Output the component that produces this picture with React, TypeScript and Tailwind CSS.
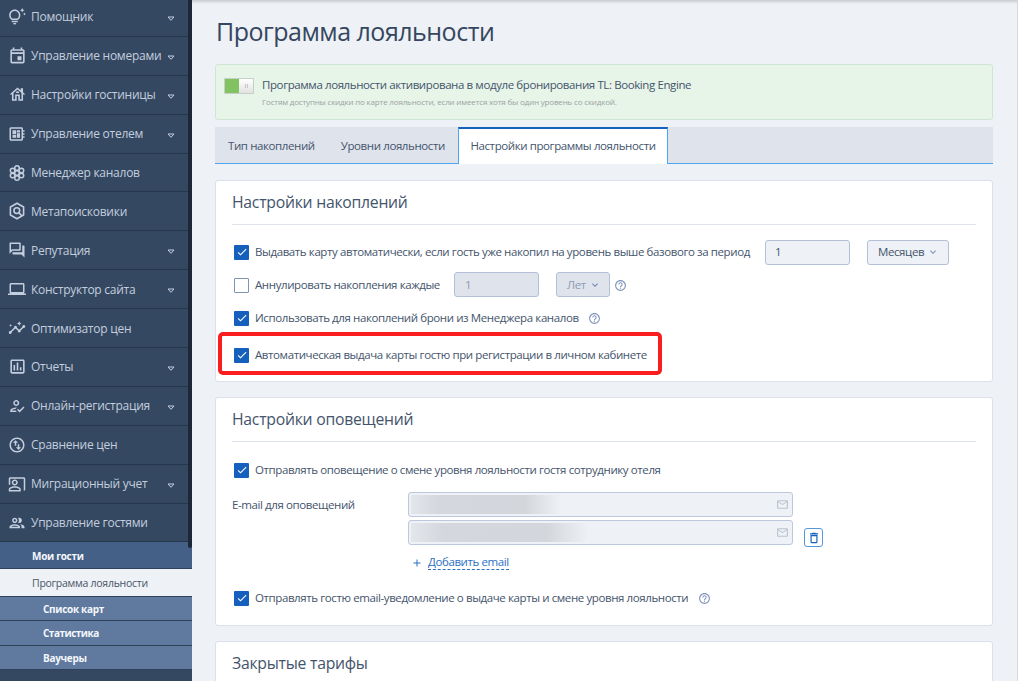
import React from "react";
import {
  MdOutlineTipsAndUpdates, MdOutlineEvent, MdOutlineHouse, MdOutlineDeveloperBoard, MdOutlineQuestionAnswer,
  MdOutlineLaptop, MdInsights, MdOutlinePoll, MdOutlineHowToReg, MdOutlineSwapVerticalCircle, MdOutlineCoPresent,
  MdOutlineGroup, MdHelpOutline, MdOutlineMail, MdDeleteOutline, MdCheck, MdKeyboardArrowDown, MdAdd,
} from "react-icons/md";

function HiveIcon() {
  return (
    <svg viewBox="0 0 18 18" className="size-[18px]" fill="none" stroke="currentColor" strokeWidth="1.5">
      <circle cx="9" cy="9" r="2.3" />
      <circle cx="9" cy="4" r="2.3" />
      <circle cx="9" cy="14" r="2.3" />
      <circle cx="4.6" cy="6.5" r="2.3" />
      <circle cx="13.4" cy="6.5" r="2.3" />
      <circle cx="4.6" cy="11.5" r="2.3" />
      <circle cx="13.4" cy="11.5" r="2.3" />
    </svg>
  );
}

function MetaIcon() {
  return (
    <svg viewBox="0 0 18 18" className="size-[18px]" fill="none" stroke="currentColor" strokeWidth="1.6">
      <path d="M9 1.3 15.6 5v8L9 16.7 2.4 13V5z" strokeLinejoin="round" />
      <circle cx="8.8" cy="8.6" r="2.9" />
      <path d="m10.9 10.8 2.8 2.8" />
    </svg>
  );
}

const items: { label: string; icon: React.ReactNode; arrow?: boolean }[] = [
  { label: "Помощник", icon: <MdOutlineTipsAndUpdates />, arrow: true },
  { label: "Управление номерами", icon: <MdOutlineEvent className="size-[19px]" />, arrow: true },
  { label: "Настройки гостиницы", icon: <MdOutlineHouse className="size-[19px]" />, arrow: true },
  { label: "Управление отелем", icon: <MdOutlineDeveloperBoard />, arrow: true },
  { label: "Менеджер каналов", icon: <HiveIcon /> },
  { label: "Метапоисковики", icon: <MetaIcon /> },
  { label: "Репутация", icon: <MdOutlineQuestionAnswer />, arrow: true },
  { label: "Конструктор сайта", icon: <MdOutlineLaptop />, arrow: true },
  { label: "Оптимизатор цен", icon: <MdInsights /> },
  { label: "Отчеты", icon: <MdOutlinePoll className="size-[19px]" />, arrow: true },
  { label: "Онлайн-регистрация", icon: <MdOutlineHowToReg />, arrow: true },
  { label: "Сравнение цен", icon: <MdOutlineSwapVerticalCircle /> },
  { label: "Миграционный учет", icon: <MdOutlineCoPresent />, arrow: true },
  { label: "Управление гостями", icon: <MdOutlineGroup /> },
];

function Sidebar() {
  return (
    <aside className="relative h-[681px] w-[192px] shrink-0 overflow-hidden bg-[#354861]">
      <nav className="-mt-[2px] flex flex-col text-[#c3cedf]">
        {items.map((it) => (
          <div key={it.label} className="flex h-[38.9px] items-center border-b border-[#26364c] pt-[1px] pl-[7px] text-[12px] font-medium tracking-[-0.26px]">
            <span className="-mt-[1px] flex w-[20px] shrink-0 justify-center text-[18px]">{it.icon}</span>
            <span className="ml-[4px] whitespace-nowrap">{it.label}</span>
            {it.arrow && (
              <svg viewBox="0 0 8 6" className="mt-[3px] mr-[17px] ml-auto h-[6px] w-[8px] shrink-0" fill="none" stroke="currentColor">
                <path d="M1 1h6L4 4.3z" />
              </svg>
            )}
          </div>
        ))}
      </nav>
      <div className="text-[10px] font-bold tracking-[-0.3px] text-[#f4f7fb]">
        <div className="flex h-[27px] items-center border-b border-[#30425b] bg-[#456087] pt-[2px] pl-[32px]">Мои гости</div>
        <div className="flex h-[27px] items-center bg-[#eef1f5] pt-[1px] pl-[32px] text-[10.5px] font-normal tracking-[-0.26px] text-[#4a5568]">Программа лояльности</div>
        <div className="flex h-[25px] items-center border-y border-[#30425b] bg-[#5f799f] pt-[1px] pl-[43px]">Список карт</div>
        <div className="flex h-[24.5px] items-center border-b border-[#30425b] bg-[#5f799f] pl-[43px] tracking-[-0.5px]">Статистика</div>
        <div className="flex h-[24.5px] items-center border-b border-[#30425b] bg-[#5f799f] pt-[1px] pl-[43px]">Ваучеры</div>
      </div>
      <div className="absolute top-0 right-0 h-[548px] w-[4px] rounded-b bg-[#1c2738]" />
    </aside>
  );
}

function Check({ on = true }: { on?: boolean }) {
  return on ? (
    <span className="flex size-[15px] shrink-0 items-center justify-center rounded-[1px] bg-[#1560bd] text-[12px] text-white"><MdCheck /></span>
  ) : (
    <span className="size-[15px] shrink-0 rounded-[1px] border-[1.5px] border-[#7d93b8] bg-white" />
  );
}

function Help({ className }: { className: string }) {
  return <MdHelpOutline className={"size-[13px] shrink-0 text-[#8093bb] " + className} />;
}

function Heading({ children }: { children: React.ReactNode }) {
  return <h2 className="flex h-[44px] items-center border-b border-[#dde2ec] pt-[1px] text-[15.75px] tracking-[-0.25px] text-[#44546c]">{children}</h2>;
}

function EmailField({ className }: { className: string }) {
  return (
    <div className="flex h-[25px] w-[385px] items-center rounded-[3px] border border-[#bcc8dc] bg-[#eef1f5] p-[2px]">
      <div className={"h-full bg-[linear-gradient(90deg,#e3e6ea,#d4d7dd_18%,#d3d6db_76%,#eef1f5)] " + className} />
      <MdOutlineMail className="mr-[1px] ml-auto size-[13px] text-[#b9c2d0]" />
    </div>
  );
}

export default function App() {
  return (
    <div className="flex h-[681px] w-[1018px] overflow-hidden bg-[#eef1f5] font-['Open_Sans','Noto_Sans',sans-serif] text-[11.5px] tracking-[-0.4px] text-[#44546c]">
      <Sidebar />
      <main className="h-[681px] flex-1 border-r border-[#d5d9de] bg-[linear-gradient(#c9ccd0,#eef1f5_4px)] pr-[24px] pl-[23px]">
        <h1 className="mt-[12px] h-[38px] pl-[1px] text-[25px] leading-[38px] font-normal tracking-[-0.5px] whitespace-nowrap text-[#35465f]">Программа лояльности</h1>
        <section className="mt-[14px] flex h-[56px] rounded-[3px] border border-[#cfe6d2] bg-[#e7f4e8] pl-[8px]">
          <div className="mt-[13px] flex h-[16px] w-[30px] rounded-[1px] border border-[#c5cfc5] bg-[#82c262]">
            <div className="ml-auto flex w-[14px] items-center justify-center gap-[1px] bg-linear-to-b from-white to-[#e2e2e2]">
              <i className="h-[4px] w-px bg-[#c5c5c5]" /><i className="h-[4px] w-px bg-[#c5c5c5]" />
            </div>
          </div>
          <div className="ml-[8px] pt-[11px]">
            <p className="h-[18px] leading-[18px]">Программа лояльности активирована в модуле бронирования TL: Booking Engine</p>
            <p className="h-[16px] text-[8px] leading-[16px] tracking-[-0.17px] text-[#9aa3a4]">Гостям доступны скидки по карте лояльности, если имеется хотя бы один уровень со скидкой.</p>
          </div>
        </section>
        <div className="mt-[7px] flex h-[37px] bg-[#dfe3ec]">
          <div className="flex w-[243px] items-center gap-[26px] border-b border-[#4ea6f2] pt-[2px] pl-[13px] whitespace-nowrap"><span>Тип накоплений</span><span>Уровни лояльности</span></div>
          <div className="flex w-[210px] items-center justify-center border-x border-t-2 border-x-[#4ea6f2] border-t-[#1560bd] bg-white pb-[2px] whitespace-nowrap">Настройки программы лояльности</div>
          <div className="flex-1 border-b border-[#4ea6f2]" />
        </div>

        <section className="mt-[16px] h-[202px] rounded-[3px] border border-[#dbe0ea] bg-white px-[16px]">
          <Heading>Настройки накоплений</Heading>
          <div className="mt-[14px] flex h-[26px] items-center pl-[2px]">
            <Check /><span className="ml-[6px] w-[510px] whitespace-nowrap">Выдавать карту автоматически, если гость уже накопил на уровень выше базового за период</span>
            <div className="flex h-[25px] w-[85px] items-center rounded-[3px] border border-[#b4c0d8] bg-[#eef1f5] pl-[9px]">1</div>
            <div className="ml-[17px] flex h-[25px] w-[82px] items-center rounded-[3px] border border-[#b4c0d8] bg-[#eef1f5] pl-[10px]">Месяцев<MdKeyboardArrowDown className="ml-[3px] size-[12px] text-[#8093bb]" /></div>
          </div>
          <div className="mt-[7px] flex h-[26px] items-center pl-[2px]">
            <Check on={false} /><span className="ml-[6px] w-[199px] whitespace-nowrap">Аннулировать накопления каждые</span>
            <div className="mb-px flex h-[25px] w-[85px] items-center rounded-[3px] border border-[#b4c0d8] bg-[#dfe3ec] pl-[10px] text-[#8d9bb3]">1</div>
            <div className="mb-px ml-[17px] flex h-[25px] w-[54px] items-center rounded-[3px] border border-[#b4c0d8] bg-[#dfe3ec] pl-[10px] text-[#8d9bb3]">Лет<MdKeyboardArrowDown className="ml-[3px] size-[12px] text-[#7187b4]" /></div>
            <Help className="mt-[1px] ml-[4px]" />
          </div>
          <div className="mt-[7px] flex h-[26px] items-center pl-[2px]">
            <Check /><span className="ml-[6px] whitespace-nowrap">Использовать для накоплений брони из Менеджера каналов</span><Help className="ml-[9px]" />
          </div>
          <div className="relative mt-[11px] flex h-[26px] items-center pl-[2px]">
            <Check /><span className="ml-[6px] whitespace-nowrap">Автоматическая выдача карты гостю при регистрации в личном кабинете</span>
            <div className="absolute -top-[10px] -left-[14px] h-[43px] w-[444px] rounded-[5px] border-4 border-[#fa1e1e]" />
          </div>
        </section>

        <section className="mt-[15px] h-[229px] rounded-[3px] border border-[#dbe0ea] bg-white px-[16px]">
          <Heading>Настройки оповещений</Heading>
          <div className="mt-[15px] flex h-[26px] items-center pl-[2px]">
            <Check /><span className="ml-[6px] whitespace-nowrap">Отправлять оповещение о смене уровня лояльности гостя сотруднику отеля</span>
          </div>
          <div className="mt-[9px] flex">
            <span className="w-[176px] pt-[4px]">E-mail для оповещений</span>
            <div>
              <EmailField className="w-[150px]" />
              <div className="mt-[3px] flex">
                <EmailField className="w-[178px]" />
                <div className="mt-[8px] ml-[11px] flex size-[19px] items-center justify-center rounded-[3px] border border-[#5596e0] text-[#1560bd]"><MdDeleteOutline className="size-[14px]" /></div>
              </div>
              <div className="mt-[6px] flex h-[19px] items-center pl-[3px] text-[#2b6fc4]"><MdAdd className="size-[12px]" /><span className="ml-[5px] border-b border-dashed border-[#2b6fc4] leading-[14px]">Добавить email</span></div>
            </div>
          </div>
          <div className="mt-[13px] flex h-[26px] items-center pl-[2px]">
            <Check /><span className="ml-[6px] whitespace-nowrap">Отправлять гостю email-уведомление о выдаче карты и смене уровня лояльности</span><Help className="ml-[10px]" />
          </div>
        </section>

        <section className="mt-[15px] h-[60px] rounded-t-[3px] border border-[#dbe0ea] bg-white px-[16px]">
          <Heading>Закрытые тарифы</Heading>
        </section>
      </main>
    </div>
  );
}
